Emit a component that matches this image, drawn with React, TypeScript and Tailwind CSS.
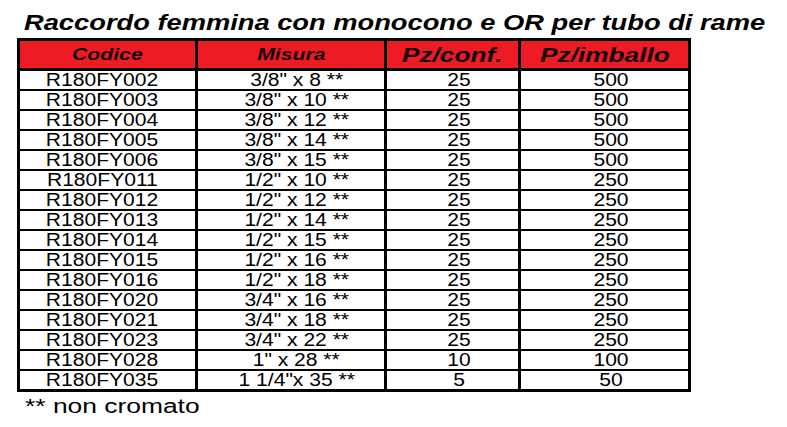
import React from "react";

const rows: [string, string, string, string][] = [
  ["R180FY002", '3/8" x 8 **', "25", "500"],
  ["R180FY003", '3/8" x 10 **', "25", "500"],
  ["R180FY004", '3/8" x 12 **', "25", "500"],
  ["R180FY005", '3/8" x 14 **', "25", "500"],
  ["R180FY006", '3/8" x 15 **', "25", "500"],
  ["R180FY011", '1/2" x 10 **', "25", "250"],
  ["R180FY012", '1/2" x 12 **', "25", "250"],
  ["R180FY013", '1/2" x 14 **', "25", "250"],
  ["R180FY014", '1/2" x 15 **', "25", "250"],
  ["R180FY015", '1/2" x 16 **', "25", "250"],
  ["R180FY016", '1/2" x 18 **', "25", "250"],
  ["R180FY020", '3/4" x 16 **', "25", "250"],
  ["R180FY021", '3/4" x 18 **', "25", "250"],
  ["R180FY023", '3/4" x 22 **', "25", "250"],
  ["R180FY028", '1" x 28 **', "10", "100"],
  ["R180FY035", '1 1/4"x 35 **', "5", "50"],
];

const cols = "grid grid-cols-[175px_186px_131px_167px] gap-x-[3px]";

function D({ children, cls }: { children: React.ReactNode; cls: string }) {
  return (
    <div className={`bg-white h-[18px] flex items-center justify-center ${cls}`}>
      <span className="inline-block whitespace-pre text-[18px] leading-[18px] scale-x-[1.17] origin-center text-black">
        {children}
      </span>
    </div>
  );
}

function H({ children, big }: { children: React.ReactNode; big?: boolean }) {
  return (
    <div className="bg-[#ed1c24] h-[27px] flex items-center justify-center">
      <span
        className={`inline-block whitespace-pre font-bold italic scale-x-[1.25] origin-center text-[#160404] ${
          big ? "text-[21px] leading-[24px]" : "text-[17px] leading-[20px]"
        }`}
      >
        {children}
      </span>
    </div>
  );
}

export default function App() {
  return (
    <div
      className="w-[787px] h-[427px] bg-white overflow-hidden"
      style={{ fontFamily: '"Liberation Sans", Arial, sans-serif' }}
    >
      <div className="pt-[10px] pl-[24px] h-[38px]">
        <span className="inline-block whitespace-pre text-[22px] leading-[26px] font-bold italic scale-x-[1.24] origin-left text-black">
          Raccordo femmina con monocono e OR per tubo di rame
        </span>
      </div>
      <div className="ml-[17px] w-[674px] bg-black p-[3px] flex flex-col">
        <div className={cols}>
          <H>Codice</H>
          <H>Misura</H>
          <H big>Pz/conf.</H>
          <H big>Pz/imballo</H>
        </div>
        <div className="flex flex-col gap-y-[2px] mt-[3px]">
          {rows.map((r) => (
            <div key={r[0]} className={cols}>
              <D cls="pr-[10px]">{r[0]}</D>
              <D cls="pl-[11px]">{r[1]}</D>
              <D cls="pl-[14px]">{r[2]}</D>
              <D cls="pl-[13px]">{r[3]}</D>
            </div>
          ))}
        </div>
      </div>
      <div className="pl-[25px] mt-[2px]">
        <span className="inline-block whitespace-pre text-[20px] leading-[24px] scale-x-[1.32] origin-left text-black">
          ** non cromato
        </span>
      </div>
    </div>
  );
}
